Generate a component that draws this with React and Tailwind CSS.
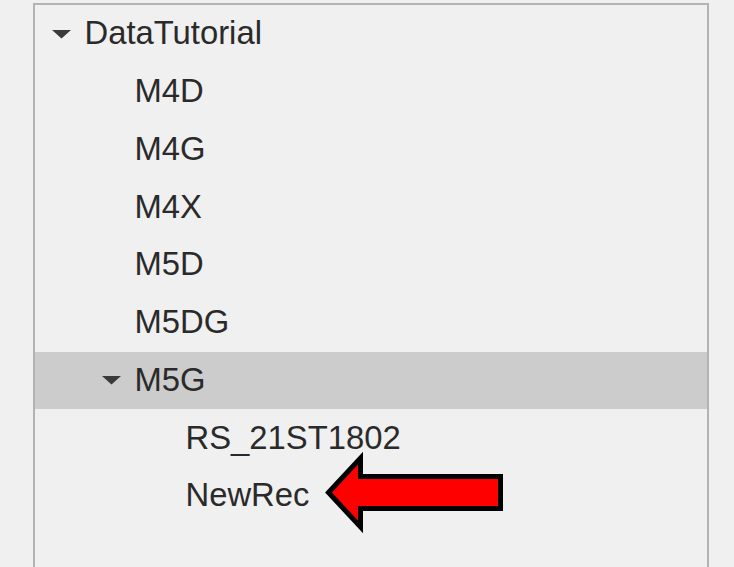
import React from 'react';

const rows = [
  { label: 'DataTutorial', level: 0, open: true },
  { label: 'M4D', level: 1 },
  { label: 'M4G', level: 1 },
  { label: 'M4X', level: 1 },
  { label: 'M5D', level: 1 },
  { label: 'M5DG', level: 1 },
  { label: 'M5G', level: 1, open: true, selected: true },
  { label: 'RS_21ST1802', level: 2 },
  { label: 'NewRec', level: 2 },
];

const indent = ['pl-[16px]', 'pl-[66px]', 'pl-[117px]'];

function Caret() {
  return (
    <svg width="21" height="10" viewBox="0 0 21 10" className="block">
      <path d="M1 1 L20 1 L10.5 9.5 Z" fill="#3a3a3a" />
    </svg>
  );
}

function TreeRow({ row }) {
  return (
    <div
      className={`flex items-center h-[57.75px] ${indent[row.level]} ${row.selected ? 'bg-[#cccccc]' : ''}`}
    >
      <div className="w-[33.5px] flex items-center">{row.open && <Caret />}</div>
      <span className="text-[32.8px] leading-none text-[#2a2a2a] whitespace-nowrap">{row.label}</span>
    </div>
  );
}

export default function App() {
  return (
    <div
      className="relative w-[734px] h-[567px] overflow-hidden bg-[#f0f0f0]"
      style={{ fontFamily: '"Liberation Sans", Arial, sans-serif' }}
    >
      <div className="ml-[33px] mt-[3px] w-[676px] h-[600px] border-2 border-b-0 border-[#b3b3b3] bg-[#f0f0f0]">
        {rows.map((r) => (
          <TreeRow key={r.label} row={r} />
        ))}
      </div>

      {/* annotation arrow */}
      <svg className="absolute inset-0" width="734" height="567" viewBox="0 0 734 567">
        <path
          d="M328.5 492.5 L360.5 458 L360.5 476.5 L500.5 476.5 L500.5 508.5 L360.5 508.5 L360.5 527 Z"
          fill="#ff0000"
          stroke="#000000"
          strokeWidth="5"
          strokeLinejoin="miter"
        />
      </svg>
    </div>
  );
}
